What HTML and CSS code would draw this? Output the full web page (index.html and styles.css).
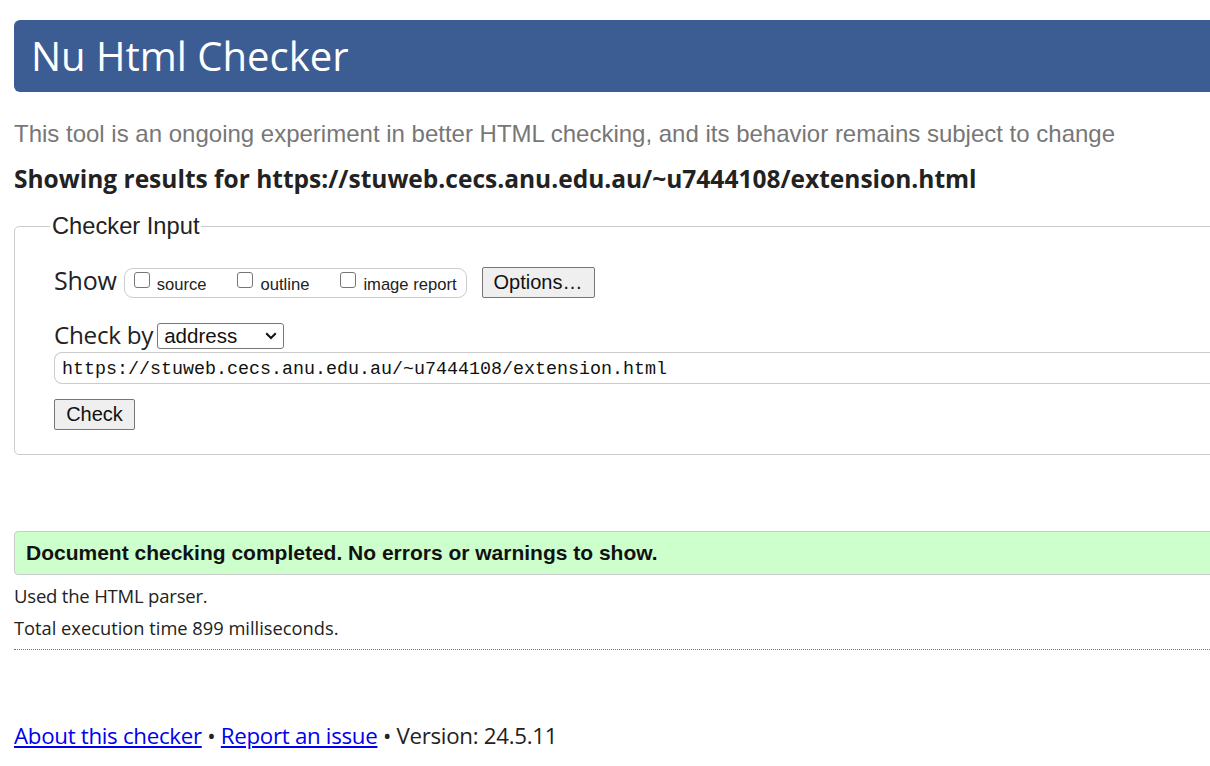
FILE: index.html
```html
<!DOCTYPE html>
<html lang="en">
<head>
<meta charset="utf-8">
<title>Showing results for https://stuweb.cecs.anu.edu.au/~u7444108/extension.html - Nu Html Checker</title>
<link rel="stylesheet" href="styles.css">
</head>
<body>
<div class="page">
  <h1 class="masthead">Nu Html Checker</h1>
  <p class="intro">This tool is an ongoing experiment in better HTML checking, and its behavior remains subject to change</p>
  <p class="showing">Showing results for https://stuweb.cecs.anu.edu.au/~u7444108/extension.html</p>

  <fieldset class="checker">
    <legend class="checker-legend">Checker Input</legend>
    <div class="row show-row">
      <span class="label show-label">Show</span>
      <span class="opts">
        <label class="opt"><input type="checkbox"><span>source</span></label>
        <label class="opt"><input type="checkbox"><span>outline</span></label>
        <label class="opt"><input type="checkbox"><span>image report</span></label>
      </span>
      <button class="btn options-btn" type="button">Options…</button>
    </div>
    <div class="row by-row">
      <span class="label by-label">Check by</span>
      <span class="select-wrap">
        <span class="select">address</span>
        <svg class="chev" width="12" height="8" viewBox="0 0 12 8"><path d="M1.2 1.3 L6 6 L10.8 1.3" fill="none" stroke="#111" stroke-width="2"/></svg>
      </span>
    </div>
    <div class="url">https://stuweb.cecs.anu.edu.au/~u7444108/extension.html</div>
    <button class="btn check-btn" type="button">Check</button>
  </fieldset>

  <p class="success">Document checking completed. No errors or warnings to show.</p>
  <p class="details first">Used the HTML parser.</p>
  <p class="details second">Total execution time 899 milliseconds.</p>
  <hr class="dotted">

  <p class="footer"><a href="#">About this checker</a> • <a href="#">Report an issue</a> • Version: 24.5.11</p>
</div>
</body>
</html>
```

FILE: styles.css
```css
html {
  overflow: hidden;
  background: #fff;
}
body {
  margin: 0;
  font-family: "Open Sans", "Noto Sans", sans-serif;
  color: #222;
}
.page {
  width: 1260px;
  padding: 20px 0 0 14px;
}
.masthead {
  margin: 0;
  height: 72px;
  box-sizing: border-box;
  padding-left: 17px;
  background: #3c5c94;
  color: #fff;
  border-radius: 6px;
  font-family: "Open Sans", sans-serif;
  font-weight: 400;
  font-size: 40px;
  line-height: 72px;
}
.intro {
  margin: 0;
  padding-top: 28px;
  font-family: "Liberation Sans", Arial, sans-serif;
  font-size: 24px;
  line-height: 28px;
  color: #777;
}
.showing {
  margin: 0;
  padding-top: 16px;
  font-family: "Open Sans", sans-serif;
  font-weight: 700;
  font-size: 24.5px;
  line-height: 30px;
  color: #222;
}
.checker {
  margin: 19px 0 0 0;
  padding: 10px 0 24px 39px;
  border: 1px solid #ccc;
  border-radius: 5px;
}
.checker-legend {
  padding: 0 2px;
  margin-left: -4px;
  font-family: "Liberation Sans", Arial, sans-serif;
  font-size: 23.7px;
  color: #222;
}
.row {
  display: flex;
  align-items: center;
}
.label {
  font-family: "Open Sans", sans-serif;
  color: #222;
}
.show-row {
  margin-top: 17px;
  height: 31px;
}
.show-label {
  margin-right: 7px;
  padding-bottom: 5px;
  font-size: 25px;
  letter-spacing: -0.2px;
}
.opts {
  display: flex;
  align-items: center;
  height: 30px;
  box-sizing: border-box;
  border: 1px solid #ccc;
  border-radius: 9px;
  padding: 0 9px 0 9px;
}
.opt {
  display: flex;
  align-items: center;
  font-family: "Liberation Sans", Arial, sans-serif;
  font-size: 16.6px;
  color: #222;
  margin-right: 31px;
}
.opt:last-child {
  margin-right: 0;
}
.opt input {
  appearance: none;
  -webkit-appearance: none;
  flex: 0 0 16px;
  margin: 0 7px 5px 0;
  width: 16px;
  height: 16px;
  box-sizing: border-box;
  border: 1px solid #767676;
  border-radius: 3px;
  background: #fff;
}
.opt span {
  padding-top: 4px;
}
.btn {
  font-family: "Liberation Sans", Arial, sans-serif;
  font-size: 20px;
  color: #111;
  background: #efefef;
  border: 1px solid #767676;
  border-radius: 2px;
  padding: 0 10px;
  box-sizing: border-box;
}
.options-btn {
  margin-left: 15px;
  height: 31px;
  width: 113px;
}
.by-row {
  margin-top: 25px;
  height: 26px;
}
.by-label {
  margin-right: 4px;
  padding-bottom: 4px;
  font-size: 24.3px;
  letter-spacing: -0.3px;
}
.select-wrap {
  position: relative;
  display: inline-block;
}
.select {
  display: block;
  width: 127px;
  height: 26px;
  box-sizing: border-box;
  border: 1px solid #767676;
  border-radius: 3px;
  padding-left: 6px;
  font-family: "Liberation Sans", Arial, sans-serif;
  font-size: 20.5px;
  line-height: 24px;
  color: #111;
  background: #fff;
}
.chev {
  position: absolute;
  right: 7px;
  top: 9px;
}
.url {
  margin-top: 3px;
  height: 32px;
  box-sizing: border-box;
  border: 1px solid #ccc;
  border-right: none;
  border-radius: 8px 0 0 8px;
  padding: 2px 0 0 7px;
  font-family: "Liberation Mono", "DejaVu Sans Mono", monospace;
  font-size: 18.33px;
  line-height: 30px;
  color: #111;
}
.check-btn {
  margin-top: 15px;
  height: 31px;
  width: 81px;
  display: block;
}
.success {
  margin: 76px 0 0 0;
  height: 44px;
  box-sizing: border-box;
  border: 1px solid #ccc;
  border-radius: 4px;
  background: #ccffcc;
  padding-left: 11px;
  font-family: "Liberation Sans", Arial, sans-serif;
  font-weight: 700;
  font-size: 21px;
  line-height: 42px;
  color: #111;
}
.details {
  margin: 0;
  font-family: "Open Sans", sans-serif;
  line-height: 32px;
  color: #222;
}
.details.first {
  margin-top: 5px;
  font-size: 18.5px;
  letter-spacing: -0.2px;
}
.details.second {
  font-size: 18.3px;
}
.dotted {
  margin: 5px 0 0 0;
  border: none;
  border-top: 1px dotted #777;
  height: 0;
}
.footer {
  margin: 70px 0 0 0;
  font-family: "Open Sans", sans-serif;
  font-size: 22.3px;
  line-height: 32px;
  color: #222;
  letter-spacing: -0.3px;
}
.footer a {
  color: #0000ee;
}
```
